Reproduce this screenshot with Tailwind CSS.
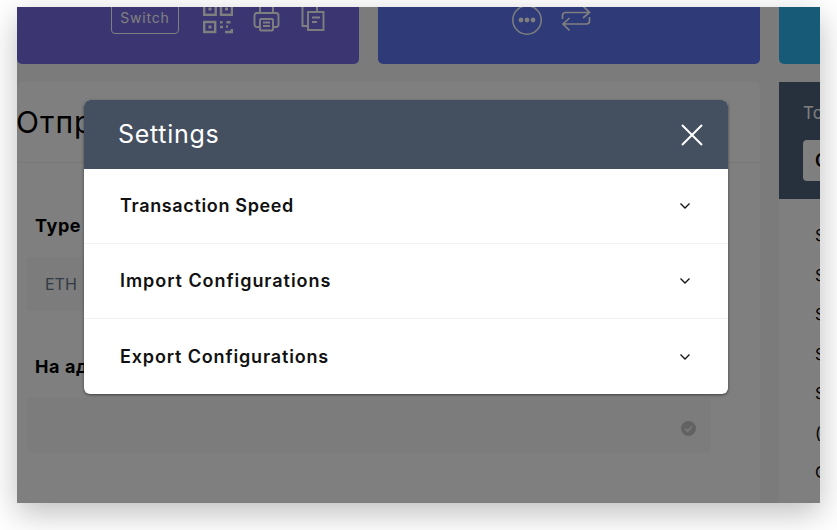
<!DOCTYPE html>
<html lang="en">
<head>
  <meta charset="UTF-8" />
  <meta name="viewport" content="width=device-width, initial-scale=1" />
  <title>Settings</title>
  <script src="https://cdn.jsdelivr.net/npm/@tailwindcss/browser@4"></script>
</head>
<body class="bg-white h-[530px] w-[837px] overflow-hidden font-['Inter',sans-serif]">

  <!-- Window -->
  <div class="relative ml-[17px] mt-[7px] w-[803px] h-[496px] overflow-hidden bg-[#f6f6f6] shadow-[0_10px_30px_rgba(0,0,0,0.26)]">

    <!-- Top cards -->
    <div class="flex gap-[19px] h-[57px]">
      <div class="w-[342px] shrink-0 bg-[#766ce4] rounded-b-[5px] flex items-start pl-[94px]">
        <div class="w-[68px] h-[34px] -mt-[7px] border border-white rounded-[4px] text-white text-[14px] tracking-[0.8px] flex items-center justify-center">Switch</div>
        <svg class="ml-[24px] -mt-[2px] shrink-0" width="30" height="30" viewBox="0 0 30 30" fill="none" stroke="#fff" stroke-width="2.400">
          <rect x="1.200" y="-3" width="11.500" height="12.800"/><rect x="18" y="-3" width="11" height="12.800"/><rect x="1.200" y="17" width="11" height="10"/>
          <rect x="5.500" y="2.500" width="3" height="3" fill="#fff" stroke="none"/><rect x="22" y="2.500" width="3" height="3" fill="#fff" stroke="none"/><rect x="5.500" y="20.500" width="3" height="3" fill="#fff" stroke="none"/>
          <path d="M17 17.200h2.500M23.500 17.200h4M17 22h3M23 21.500h2M22 27h6.800v-3"/>
        </svg>
        <svg class="ml-[20px] -mt-[2px] shrink-0" width="27" height="28" viewBox="0 0 27 28" fill="none" stroke="#fff" stroke-width="1.900">
          <path d="M7 2v6h13V2M6 22H4a2.500 2.500 0 0 1-2.500-2.500v-9A2.500 2.500 0 0 1 4 8h19a2.500 2.500 0 0 1 2.500 2.500v9A2.500 2.500 0 0 1 23 22h-2"/>
          <rect x="7" y="14" width="13" height="11.500" rx="1"/><path d="M10 17.500h7M10 21h7"/>
        </svg>
        <svg class="ml-[21px] -mt-[2px] shrink-0" width="24" height="28" viewBox="0 0 24 28" fill="none" stroke="#fff" stroke-width="1.900">
          <path d="M1.500 2v19h5M16 2v5"/><rect x="7" y="7" width="15.500" height="18"/><path d="M11 12.500h8M11 17h5"/>
        </svg>
      </div>
      <div class="w-[382px] shrink-0 bg-[#5c76f0] rounded-b-[5px] flex items-start pl-[134px]">
        <svg class="-mt-[2px] shrink-0" width="30" height="30" viewBox="0 0 30 30" fill="none" stroke="#fff" stroke-width="1.500">
          <circle cx="15" cy="15" r="14.200"/><circle cx="9" cy="15" r="2.400" fill="#fff" stroke="none"/><circle cx="15" cy="15" r="2.400" fill="#fff" stroke="none"/><circle cx="21" cy="15" r="2.400" fill="#fff" stroke="none"/>
        </svg>
        <svg class="ml-[19px] -mt-[2px] shrink-0" width="30" height="28" viewBox="0 0 30 28" fill="none" stroke="#fff" stroke-width="1.700">
          <path d="M1.500 14v-3.500a3 3 0 0 1 3-3H28M22 1l6.500 6.500L22 13M28.500 12v4a3 3 0 0 1-3 3H2M8.500 13L2 19l6.500 6.500"/>
        </svg>
      </div>
      <div class="flex-1 bg-[#2cb4f0] rounded-bl-[5px]"></div>
    </div>

    <!-- Lower content -->
    <div class="flex gap-[19px] mt-[18px] h-[421px]">
      <div class="w-[743px] shrink-0 bg-white rounded-t-[5px]">
        <div class="h-[81px] border-b border-[#f0f0f0] flex items-end pb-[22px]">
          <h1 class="-ml-[1px] text-[30px] leading-[36px] text-black tracking-[1px]">Отправить</h1>
        </div>
        <div class="px-[10px]">
          <p class="pl-[8px] mt-[51px] text-[18px] leading-[24px] font-bold text-black tracking-[0.6px]">Type</p>
          <div class="mt-[19px] w-[684px] h-[54px] bg-[#f9f9f9] rounded-[4px] flex items-center pl-[18px] pb-[1px] text-[16px] text-[#66788c]">ETH</div>
          <p class="pl-[8px] mt-[44px] text-[18px] leading-[24px] font-bold text-black tracking-[0.6px]">На адрес</p>
          <div class="mt-[19px] w-[684px] h-[55px] bg-[#f9f9f9] rounded-[4px] flex items-center justify-end pr-[15px] pt-[6px]">
            <svg width="15" height="15" viewBox="0 0 15 15"><circle cx="7.500" cy="7.500" r="7.500" fill="#c4c4c4"/><path d="M4 7.700l2.500 2.500L11 5.500" fill="none" stroke="#f2f2f2" stroke-width="1.800"/></svg>
          </div>
        </div>
      </div>
      <div class="flex-1 bg-white rounded-tl-[5px]">
        <div class="h-[117px] bg-[#4c627a] pl-[24px] pt-[20px]">
          <p class="text-[17px] leading-[22px] text-white">To</p>
          <div class="mt-[16px] h-[41px] bg-white rounded-l-[4px] pl-[12px] flex items-center text-[18px] font-semibold text-black">C</div>
        </div>
        <ul class="pl-[36px] pt-[17px] text-[16px] leading-[39.500px] text-black">
          <li>S</li><li>S</li><li>S</li><li>S</li><li>S</li><li>(</li><li>C</li>
        </ul>
      </div>
    </div>

    <!-- Overlay -->
    <div class="absolute inset-0 bg-black/50"></div>

    <!-- Settings modal -->
    <div class="absolute left-[67px] top-[93px] w-[644px] rounded-[6px] overflow-hidden bg-white shadow-[0_1px_3px_rgba(0,0,0,0.5)]">
      <div class="h-[69px] bg-[#444f60] flex items-center justify-between pl-[34px] pr-[25px]">
        <h2 class="text-[25px] text-white tracking-[0.7px]">Settings</h2>
        <svg width="22" height="22" viewBox="0 0 22 22" fill="none" stroke="#fff" stroke-width="2"><path d="M1 1l20 20M21 1L1 21"/></svg>
      </div>
      <div class="h-[75px] border-b border-[#f3f3f6] flex items-center justify-between pl-[36px] pr-[38px]">
        <span class="-mt-[1px] text-[18px] font-semibold text-[#111] tracking-[0.65px]">Transaction Speed</span>
        <svg width="10" height="6" viewBox="0 0 10 6" fill="none" stroke="#111" stroke-width="1.300"><path d="M.5.500L5 5 9.500.500"/></svg>
      </div>
      <div class="h-[75px] border-b border-[#f3f3f6] flex items-center justify-between pl-[36px] pr-[38px]">
        <span class="-mt-[1px] text-[18px] font-semibold text-[#111] tracking-[0.95px]">Import Configurations</span>
        <svg width="10" height="6" viewBox="0 0 10 6" fill="none" stroke="#111" stroke-width="1.300"><path d="M.5.500L5 5 9.500.500"/></svg>
      </div>
      <div class="h-[75px] flex items-center justify-between pl-[36px] pr-[38px]">
        <span class="-mt-[1px] text-[18px] font-semibold text-[#111] tracking-[0.85px]">Export Configurations</span>
        <svg width="10" height="6" viewBox="0 0 10 6" fill="none" stroke="#111" stroke-width="1.300"><path d="M.5.500L5 5 9.500.500"/></svg>
      </div>
    </div>
  </div>

</body>
</html>
